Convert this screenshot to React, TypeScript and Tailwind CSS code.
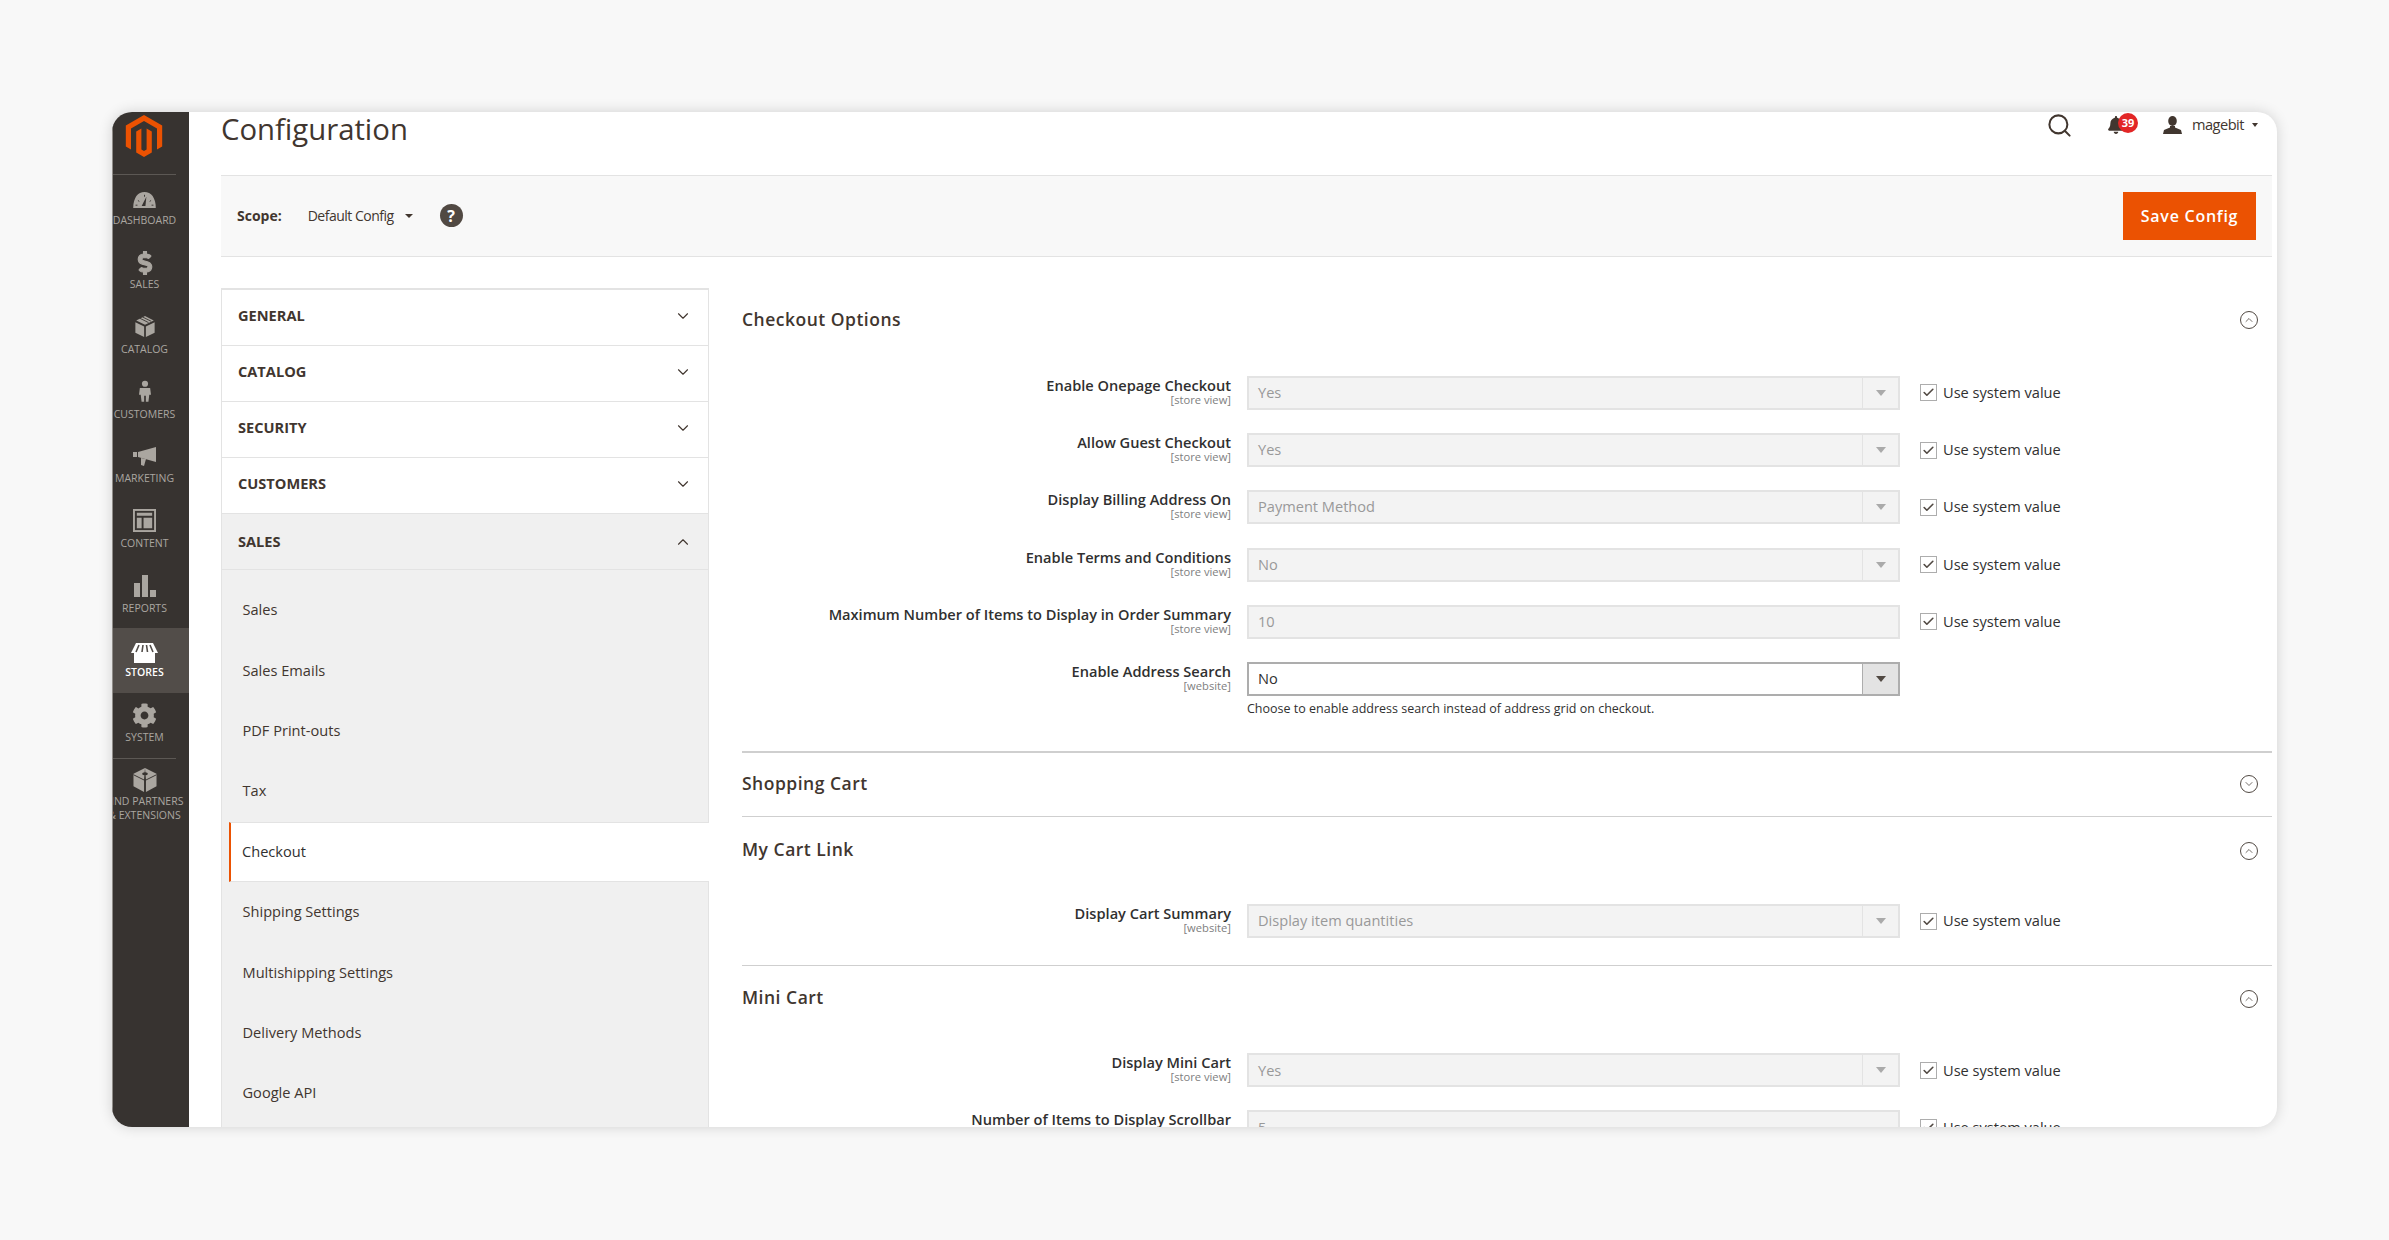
import React from 'react';
import { SiMagento } from 'react-icons/si';
import { FaCog, FaDollarSign, FaBell } from 'react-icons/fa';
import { ChevronDown, ChevronUp, Search, Check } from 'lucide-react';

const Gauge = () => (
  <svg width="23" height="16" viewBox="0 0 24 17" className="mt-[4px]">
    <path d="M0 17C0 6 5 0 12 0s12 6 12 17z" fill="#aaa6a0" />
    <path d="M14 5l-5 10h4z" fill="#373330" />
    <path d="M5 9l1.500 1M12 3v2M19 9l-1.500 1M2.500 14h2M19.500 14h2" stroke="#373330" strokeWidth="1" />
  </svg>
);
const Box = () => (
  <svg width="20" height="21" viewBox="0 0 22 24" className="-mt-[2px]">
    <path d="M11 0l10 5-10 5L1 5z" fill="#aaa6a0" />
    <path d="M5 2.500l10 5M8 1l10 5" stroke="#373330" strokeWidth="1" />
    <path d="M0 7l10 5v12L0 19zM22 7l-10 5v12l10-5z" fill="#aaa6a0" />
  </svg>
);
const Person = () => (
  <svg width="12" height="24" viewBox="0 0 14 25" className="-mt-[2px]">
    <circle cx="7" cy="4" r="3.600" fill="#aaa6a0" />
    <path d="M1 9h12l1 8h-2l-1 8H8v-7H6v7H3l-1-8H0z" fill="#aaa6a0" />
  </svg>
);
const Megaphone = () => (
  <svg width="23" height="19" viewBox="0 0 23 19" fill="#aaa6a0">
    <path d="M0 5h4v5H0z" />
    <path d="M5 5l18-5v15L5 10z" />
    <path d="M8 11l5 1-2 7-3-1z" />
  </svg>
);
const Layout = () => (
  <svg width="23" height="23" viewBox="0 0 24 24" fill="none" className="-mt-[2px]">
    <rect x="1" y="1" width="22" height="22" stroke="#aaa6a0" strokeWidth="2" />
    <path d="M4 4h16v3H4zM4 9h5v11H4zM11 9h9v11h-9z" fill="#aaa6a0" />
  </svg>
);
const Bars = () => (
  <svg width="22" height="22" viewBox="0 0 22 22" fill="#aaa6a0">
    <rect x="0" y="8" width="6" height="14" />
    <rect x="8" y="0" width="6" height="22" />
    <rect x="16" y="15" width="6" height="7" />
  </svg>
);
const Store = () => (
  <svg width="27" height="20" viewBox="0 0 27 20" className="mt-[4px]">
    <path d="M3 9h21v11H3z" fill="#fff" />
    <path d="M5 0h17l5 10H0z" fill="#fff" />
    <path d="M8 2l-3 7M12 2l-1 7M15.500 2l1 7M19 2l3 7" stroke="#524d49" strokeWidth="1.600" />
  </svg>
);
const Brick = () => (
  <svg width="24" height="24" viewBox="0 0 24 25">
    <path d="M12 0l12 6v13l-11 6V12zM12 0L0 6v13l11 6V12z" fill="#aaa6a0" />
    <ellipse cx="12" cy="6" rx="3" ry="1.600" fill="#373330" />
    <path d="M0 7l12 6 12-6" stroke="#373330" strokeWidth="1" fill="none" />
  </svg>
);
const UserBust = () => (
  <svg width="19" height="18" viewBox="0 0 19 18" fill="#41362f">
    <ellipse cx="9.500" cy="5" rx="4.300" ry="5" />
    <path d="M7 10h5v1.500l6 2.500 1 4H0l1-4 6-2.500z" />
  </svg>
);

const navItems = [
  { label: 'Dashboard', icon: <Gauge /> },
  { label: 'Sales', icon: <FaDollarSign className="text-[24px] text-[#aaa6a0]" stroke="#aaa6a0" strokeWidth={24} /> },
  { label: 'Catalog', icon: <Box /> },
  { label: 'Customers', icon: <Person /> },
  { label: 'Marketing', icon: <Megaphone /> },
  { label: 'Content', icon: <Layout /> },
  { label: 'Reports', icon: <Bars /> },
  { label: 'Stores', icon: <Store />, active: true },
  { label: 'System', icon: <FaCog className="text-[25px] text-[#aaa6a0]" /> },
];

const Sidebar = () => (
  <aside className="w-[77px] shrink-0 bg-[#373330] border-l border-[#8f8c88] flex flex-col overflow-hidden">
    <div className="h-[63px] w-[63px] shrink-0 flex items-start justify-center pt-[3px] pr-[2px] border-b border-[#5c5854]">
      <SiMagento className="text-[42px] text-[#eb5202]" />
    </div>
    {navItems.map((item) => (
      <div
        key={item.label}
        className={`h-[64.7px] shrink-0 flex flex-col items-center justify-start pt-[10.5px] pr-[13px] ${item.active ? 'bg-[#524d49]' : ''}`}
      >
        <div className="h-[25px] flex items-center justify-center">{item.icon}</div>
        <span className={`mt-[2px] text-[10.5px] leading-[14px] uppercase ${item.active ? 'text-white font-semibold' : 'text-[#aaa6a0]'}`}>
          {item.label}
        </span>
      </div>
    ))}
    <div className="border-t border-[#5c5854] w-[63px] mt-[1px] pt-[9px] flex flex-col items-center">
      <Brick />
      <span className="mt-[2px] whitespace-nowrap text-[10.5px] leading-[14px] uppercase text-[#aaa6a0]">Find Partners</span>
      <span className="whitespace-nowrap text-[10.5px] leading-[14px] uppercase text-[#aaa6a0]">&amp; Extensions</span>
    </div>
  </aside>
);

const menu = ['General', 'Catalog', 'Security', 'Customers'];
const subMenu = ['Sales', 'Sales Emails', 'PDF Print-outs', 'Tax', 'Checkout', 'Shipping Settings', 'Multishipping Settings', 'Delivery Methods', 'Google API'];

const ConfigMenu = () => (
  <nav className="w-[488px] shrink-0 border-x border-t-2 border-[#e3e3e3] self-start">
    {menu.map((m) => (
      <div key={m} className="h-[56px] border-b border-[#e3e3e3] flex items-center justify-between pb-[3px] pl-[16px] pr-[16px]">
        <span className="text-[14.6px] font-bold uppercase text-[#41362f]">{m}</span>
        <ChevronDown size={18} strokeWidth={1.5} className="text-[#41362f]" />
      </div>
    ))}
    <div className="h-[56px] bg-[#f0f0f0] border-b border-[#e3e3e3] flex items-center justify-between pl-[16px] pr-[16px]">
      <span className="text-[14.6px] font-bold uppercase text-[#41362f]">Sales</span>
      <ChevronUp size={18} strokeWidth={1.5} className="text-[#41362f]" />
    </div>
    <div className="bg-[#f0f0f0] h-[570px] pt-[10px]">
      {subMenu.map((s) =>
        s === 'Checkout' ? (
          <div key={s} className="h-[60.4px] bg-white ml-[7px] -mr-[1px] border-l-2 border-[#eb5202] border-y border-y-[#e3e3e3] flex items-center pl-[11px] text-[14.6px] text-[#303030]">
            {s}
          </div>
        ) : (
          <div key={s} className="h-[60.4px] flex items-center pl-[20.5px] text-[14.6px] text-[#41362f]">
            {s}
          </div>
        )
      )}
    </div>
  </nav>
);

const SelectField = ({ value, disabled = true }: { value: string; disabled?: boolean }) => (
  <div className={`w-[653px] h-[34px] flex border-2 ${disabled ? 'border-[#e3e3e3] bg-[#f3f3f3]' : 'border-[#adadad] bg-white'}`}>
    <div className={`flex-1 flex items-center pl-[9px] text-[14.6px] ${disabled ? 'text-[#999]' : 'text-[#303030]'}`}>{value}</div>
    <div className={`w-[36px] flex items-center justify-center border-l ${disabled ? 'border-[#e3e3e3]' : 'border-[#adadad] bg-[#e3e3e3]'}`}>
      <div className={`w-0 h-0 border-x-[5px] border-x-transparent border-t-[6px] ${disabled ? 'border-t-[#aaa]' : 'border-t-[#514943]'}`} />
    </div>
  </div>
);

const Row = ({ label, scope = 'store view', value, input, system = true, note }: { label: string; scope?: string; value: string; input?: boolean; system?: boolean; note?: string }) => (
  <div className="flex h-[34px] relative">
    <div className="w-[489px] shrink-0 text-right">
      <div className="text-[14.6px] font-semibold leading-[18px] text-[#303030] whitespace-nowrap">{label}</div>
      <div className="text-[11.2px] leading-[12px] text-[#808080]">[{scope}]</div>
    </div>
    <div className="ml-[16px] relative">
      {input ? (
        <div className="w-[653px] h-[34px] border-2 border-[#e3e3e3] bg-[#f3f3f3] flex items-center pl-[9px] text-[14.6px] text-[#999]">{value}</div>
      ) : (
        <SelectField value={value} disabled={system} />
      )}
      {note && <div className="absolute top-[38px] left-0 text-[12.5px] whitespace-nowrap text-[#303030]">{note}</div>}
    </div>
    {system && (
      <div className="ml-[20px] flex items-center gap-[6px]">
        <div className="w-[17px] h-[17px] border border-[#adadad] flex items-center justify-center bg-white">
          <Check size={13} strokeWidth={3} className="text-[#514943]" />
        </div>
        <span className="text-[14.6px] text-[#303030]">Use system value</span>
      </div>
    )}
  </div>
);

const SectionHead = ({ title, open }: { title: string; open: boolean }) => (
  <div className="flex items-center justify-between pr-[14px]">
    <span className="text-[17.5px] font-semibold tracking-[0.5px] text-[#41362f]">{title}</span>
    <div className="mt-[3px] w-[18px] h-[18px] rounded-full border border-[#514943] flex items-center justify-center">
      {open ? <ChevronUp size={12} strokeWidth={1.6} className="text-[#514943]" /> : <ChevronDown size={12} strokeWidth={1.6} className="text-[#514943]" />}
    </div>
  </div>
);

const Sections = () => (
  <div className="flex-1 ml-[33px] flex flex-col min-w-0">
    <div className="mt-[17.5px]">
      <SectionHead title="Checkout Options" open />
    </div>
    <div className="mt-[44px] flex flex-col gap-[23.3px]">
      <Row label="Enable Onepage Checkout" value="Yes" />
      <Row label="Allow Guest Checkout" value="Yes" />
      <Row label="Display Billing Address On" value="Payment Method" />
      <Row label="Enable Terms and Conditions" value="No" />
      <Row label="Maximum Number of Items to Display in Order Summary" value="10" input />
      <Row label="Enable Address Search" scope="website" value="No" system={false} note="Choose to enable address search instead of address grid on checkout." />
    </div>
    <div className="mt-[54.5px] border-t-2 border-[#cfcfcf] pt-[17px] pb-[20px]">
      <SectionHead title="Shopping Cart" open={false} />
    </div>
    <div className="border-t border-[#cfcfcf] pt-[19px]">
      <SectionHead title="My Cart Link" open />
    </div>
    <div className="mt-[42px]">
      <Row label="Display Cart Summary" scope="website" value="Display item quantities" />
    </div>
    <div className="mt-[27px] border-t border-[#cfcfcf] pt-[18px]">
      <SectionHead title="Mini Cart" open />
    </div>
    <div className="mt-[43px] flex flex-col gap-[23px]">
      <Row label="Display Mini Cart" value="Yes" />
      <Row label="Number of Items to Display Scrollbar" value="5" input />
    </div>
  </div>
);

export default function App() {
  return (
    <div className="h-[1240px] bg-[#f8f8f8] pt-[112px] pl-[112px] overflow-hidden font-['Open_Sans',sans-serif]">
      <div className="w-[2165px] h-[1015px] rounded-[20px] bg-white flex overflow-hidden shadow-[0_0_14px_rgba(0,0,0,0.16)]">
        <Sidebar />
        <main className="flex-1 min-w-0 pl-[32px] pr-[5px] flex flex-col">
          <header className="h-[63px] shrink-0 flex items-start justify-between">
            <h1 className="text-[29.3px] leading-[34px] text-[#41362f]">Configuration</h1>
            <div className="flex items-center mr-[14px] h-[26px]">
              <Search size={27} strokeWidth={1.8} className="text-[#41362f] mr-[34px]" />
              <div className="relative mr-[38px]">
                <FaBell className="text-[18px] text-[#41362f]" />
                <span className="absolute -top-[3px] left-[11px] w-[20px] h-[20px] rounded-full bg-[#e22626] text-white text-[11px] font-bold flex items-center justify-center">39</span>
              </div>
              <div className="mr-[10px]"><UserBust /></div>
              <span className="text-[14.6px] tracking-[-0.5px] text-[#41362f]">magebit</span>
              <div className="ml-[8px] w-0 h-0 border-x-[3.5px] border-x-transparent border-t-[4px] border-t-[#41362f]" />
            </div>
          </header>
          <div className="h-[81.5px] shrink-0 bg-[#f8f8f8] border-y border-[#e3e3e3] flex items-center justify-between pl-[16px] pr-[16px]">
            <div className="flex items-center">
              <span className="text-[14px] font-bold text-[#41362f]">Scope:</span>
              <span className="ml-[26px] text-[14px] tracking-[-0.5px] text-[#41362f]">Default Config</span>
              <div className="ml-[11px] w-0 h-0 border-x-[4px] border-x-transparent border-t-[4px] border-t-[#41362f]" />
              <div className="ml-[27px] w-[23px] h-[23px] rounded-full bg-[#514943] flex items-center justify-center text-white text-[16px] font-bold">?</div>
            </div>
            <div className="w-[133px] h-[48px] bg-[#eb5202] flex items-center justify-center text-white text-[16px] font-semibold tracking-[0.75px]">Save Config</div>
          </div>
          <div className="flex mt-[31.5px] flex-1 min-h-0 overflow-hidden">
            <ConfigMenu />
            <Sections />
          </div>
        </main>
      </div>
    </div>
  );
}
